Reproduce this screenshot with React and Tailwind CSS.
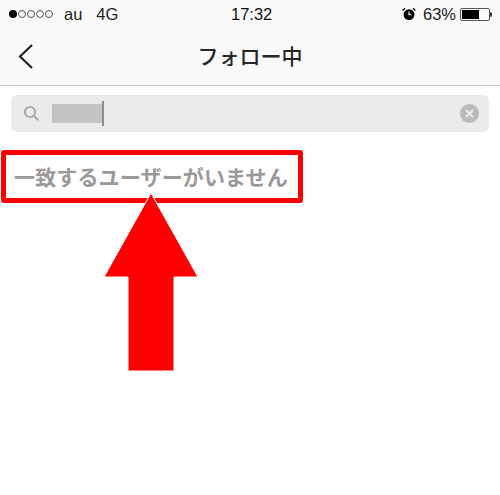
const CJK = 'font-["Noto_Sans_CJK_JP",sans-serif]';

function Signal() {
  return (
    <div className="flex items-center gap-[1px]">
      <span className="w-[8px] h-[8px] rounded-full bg-black" />
      {[0, 1, 2, 3].map(i => (
        <span key={i} className="w-[8px] h-[8px] rounded-full border border-[#555]" />
      ))}
    </div>
  );
}

function Alarm() {
  return (
    <svg width="14" height="14" viewBox="0 0 14 14">
      <circle cx="7" cy="7.6" r="5.4" fill="#000" />
      <path d="M7 4.5V7.8H9.6" fill="none" stroke="#fff" strokeWidth="1.1" />
      <path d="M0.6 3.4L3 1.2M13.4 3.4L11 1.2" stroke="#000" strokeWidth="1.4" />
    </svg>
  );
}

function Battery() {
  return (
    <div className="flex items-center">
      <div className="w-[30px] h-[13px] border border-[#555] rounded-[2px] p-[1px]">
        <div className="w-[65%] h-full bg-black" />
      </div>
      <div className="w-[2px] h-[5px] bg-[#333] rounded-r-sm" />
    </div>
  );
}

export default function App() {
  return (
    <div className='relative w-[500px] h-[495px] bg-white overflow-hidden font-["Liberation_Sans",sans-serif]'>
      {/* Status bar + nav */}
      <div className="bg-[#fafafa] border-b border-[#c8c8c8] h-[86px]">
        <div className="relative flex items-center justify-between h-[28px] pl-[9px] pr-[8px] text-[16.5px] text-[#222]">
          <div className="flex items-center">
            <Signal />
            <span className="ml-[11px]">au</span>
            <span className="ml-[14px]">4G</span>
          </div>
          <span className="absolute left-[231px] top-[5px] font-medium text-[16.5px] leading-[19px] text-[#111]">17:32</span>
          <div className="flex items-center">
            <Alarm />
            <span className="ml-[7px] mr-[4px]">63%</span>
            <Battery />
          </div>
        </div>
        <div className="relative flex items-center justify-center h-[57px]">
          <svg className="absolute left-[17px] top-[15px]" width="18" height="26" viewBox="0 0 18 26">
            <path d="M15 2L3 13.5L15 25" fill="none" stroke="#222" strokeWidth="2.2" />
          </svg>
          <span className={`${CJK} text-[21px] font-medium text-[#262626] pb-[2px]`}>フォロー中</span>
        </div>
      </div>

      {/* Search */}
      <div className="px-[11px] pt-[9px]">
        <div className="flex items-center h-[37px] bg-[#e9eaec] rounded-[6px] pl-[12px] pr-[10px]">
          <svg width="17" height="17" viewBox="0 0 17 17">
            <circle cx="7" cy="7" r="5.2" fill="none" stroke="#a3a5a8" strokeWidth="1.8" />
            <path d="M11 11L15.4 15.4" stroke="#a3a5a8" strokeWidth="1.8" />
          </svg>
          <div className="ml-[12px] w-[50px] h-[19px] bg-[#c2c3c5]" />
          <div className="w-[2px] h-[25px] bg-[#8b8d90]" />
          <div className="ml-auto w-[19px] h-[19px] rounded-full bg-[#b9babc] flex items-center justify-center">
            <svg width="9" height="9" viewBox="0 0 9 9">
              <path d="M1 1L8 8M8 1L1 8" stroke="#eee" strokeWidth="1.8" />
            </svg>
          </div>
        </div>
      </div>

      {/* Empty result */}
      <p className={`${CJK} pl-[14px] pt-[27px] text-[21px] tracking-[0.15px] leading-[34px] font-bold text-[#999] whitespace-nowrap`}>
        一致するユーザーがいません
      </p>

      {/* Red annotation */}
      <div className="absolute left-[1px] top-[150px] w-[302px] h-[53px] border-[5px] border-[#ff0000] rounded-[3px]" />
      <svg className="absolute left-[100px] top-[188px]" width="102" height="187" viewBox="100 188 102 187">
        <path d="M151 193L198 277H174V371H128V277H104Z" fill="#ff0000" stroke="#fff" strokeWidth="1" />
      </svg>
    </div>
  );
}
